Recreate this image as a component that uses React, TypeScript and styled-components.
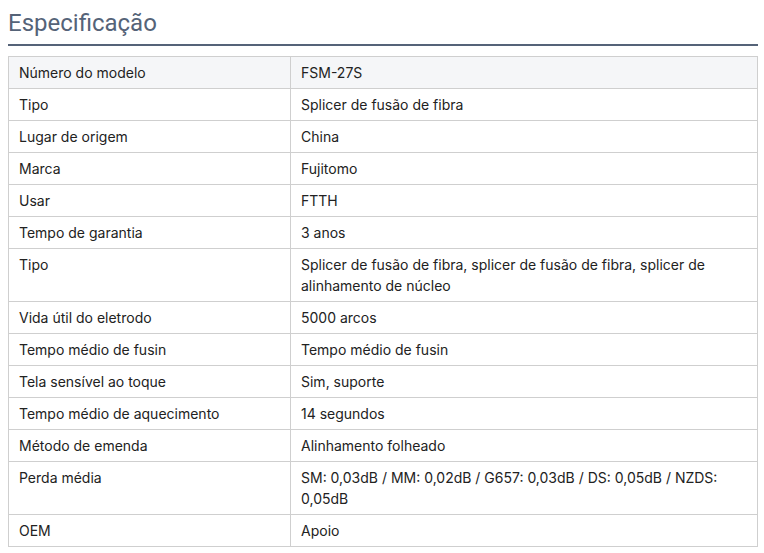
import React from "react";
import styled, { createGlobalStyle } from "styled-components";

const Global = createGlobalStyle`
  html, body { margin: 0; padding: 0; background: #fff; }
  body { padding: 8px; font-family: "Inter", "Liberation Sans", sans-serif; }
`;

const Wrap = styled.div`
  width: 750px;
`;

const Title = styled.h2`
  margin: 0;
  padding: 1px 0 7px;
  font-family: "Roboto", "Liberation Sans", sans-serif;
  font-weight: 400;
  font-size: 24px;
  line-height: 28px;
  color: #556378;
  border-bottom: 2px solid #556378;
`;

const Table = styled.table`
  margin-top: 10px;
  width: 100%;
  border-collapse: collapse;
  font-family: "Inter", "Liberation Sans", sans-serif;
  font-size: 14px;
  line-height: 21px;
  color: #222;
`;

const Row = styled.tr<{ $head?: boolean }>`
  background: ${(p) => (p.$head ? "#f5f6f8" : "#fff")};
`;

const Cell = styled.td<{ $key?: boolean }>`
  border: 1px solid #cfcfcf;
  padding: 5px 10px;
  vertical-align: top;
  text-align: left;
  width: ${(p) => (p.$key ? "261px" : "auto")};
`;

const rows: [string, string][] = [
  ["Número do modelo", "FSM-27S"],
  ["Tipo", "Splicer de fusão de fibra"],
  ["Lugar de origem", "China"],
  ["Marca", "Fujitomo"],
  ["Usar", "FTTH"],
  ["Tempo de garantia", "3 anos"],
  ["Tipo", "Splicer de fusão de fibra, splicer de fusão de fibra, splicer de alinhamento de núcleo"],
  ["Vida útil do eletrodo", "5000 arcos"],
  ["Tempo médio de fusin", "Tempo médio de fusin"],
  ["Tela sensível ao toque", "Sim, suporte"],
  ["Tempo médio de aquecimento", "14 segundos"],
  ["Método de emenda", "Alinhamento folheado"],
  ["Perda média", "SM: 0,03dB / MM: 0,02dB / G657: 0,03dB / DS: 0,05dB / NZDS: 0,05dB"],
  ["OEM", "Apoio"],
];

export default function App() {
  return (
    <Wrap>
      <Global />
      <Title>Especificação</Title>
      <Table>
        <tbody>
          {rows.map(([k, v], i) => (
            <Row key={i} $head={i === 0}>
              <Cell $key>{k}</Cell>
              <Cell>{v}</Cell>
            </Row>
          ))}
        </tbody>
      </Table>
    </Wrap>
  );
}
